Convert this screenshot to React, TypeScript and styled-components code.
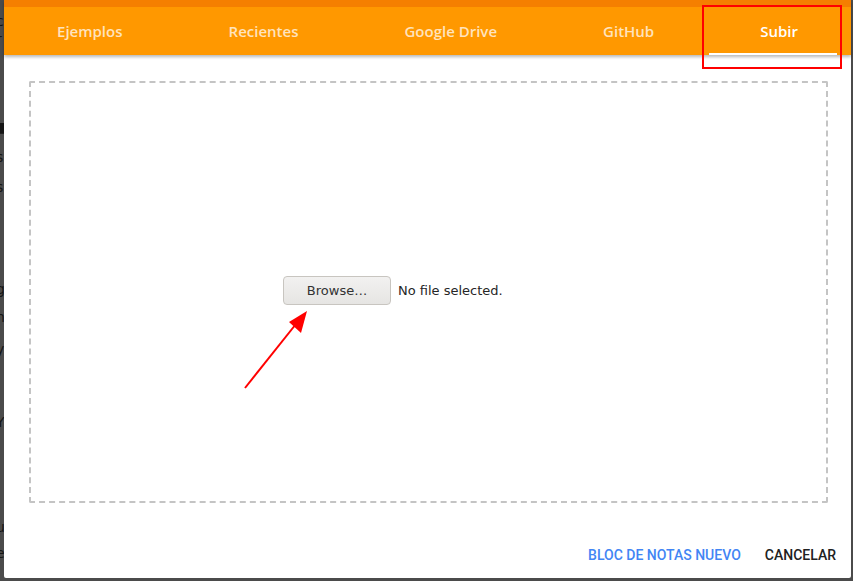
import React from "react";
import styled, { createGlobalStyle } from "styled-components";

const GlobalStyle = createGlobalStyle`
  html, body { margin: 0; padding: 0; background: #4a4a4a; overflow: hidden; }
  * { box-sizing: border-box; }
`;

const Page = styled.div`
  position: relative;
  width: 853px;
  height: 581px;
  background: #4b4b4b;
  overflow: hidden;
  font-family: "DejaVu Sans", sans-serif;
`;

const Backdrop = styled.div`
  display: flex;
  flex-direction: column;
  padding-top: 12px;
  margin-left: -4px;
  font-family: "DejaVu Sans", sans-serif;
  font-size: 14px;
  color: #151515;
`;

const BackLine = styled.div<{ $gap: number }>`
  height: ${(p) => p.$gap}px;
  line-height: 18px;
  white-space: nowrap;
`;

const Dialog = styled.div`
  position: absolute;
  left: 4px;
  top: 0;
  width: 847px;
  height: 578px;
  background: #ffffff;
  display: flex;
  flex-direction: column;
  border-bottom-left-radius: 2px;
  border-bottom-right-radius: 2px;
`;

const Header = styled.div`
  position: relative;
  z-index: 1;
  display: flex;
  flex-direction: column;
  box-shadow: 0 2px 3px rgba(0, 0, 0, 0.28);
`;

const TopStrip = styled.div`
  height: 7px;
  background: #f57f00;
`;

const TabBar = styled.div`
  position: relative;
  display: flex;
  height: 48px;
  background: #ff9800;
`;

const Tab = styled.div<{ $active?: boolean }>`
  flex: 1 1 auto;
  display: flex;
  align-items: center;
  justify-content: center;
  padding: 0 20px;
  font-family: "Open Sans", sans-serif;
  font-weight: 600;
  font-size: 15px;
  color: ${(p) => (p.$active ? "#ffffff" : "#ffe3bd")};
  white-space: nowrap;
`;

const Indicator = styled.div`
  position: absolute;
  left: 705px;
  bottom: 0;
  width: 128px;
  height: 2px;
  background: #ffffff;
`;

const Body = styled.div`
  flex: 1;
  display: flex;
  flex-direction: column;
  padding: 26px 23px 0 25px;
`;

const DropZone = styled.div`
  height: 422px;
  border: 2px dashed #c4c4c4;
  border-radius: 2px;
  display: flex;
  align-items: center;
  justify-content: center;
  padding-bottom: 4px;
`;

const FileInput = styled.div`
  width: 291px;
  display: flex;
  align-items: center;
  gap: 7px;
`;

const BrowseButton = styled.div`
  width: 108px;
  height: 29px;
  display: flex;
  align-items: center;
  justify-content: center;
  border: 1px solid #c8c5c0;
  border-radius: 4px;
  background: linear-gradient(#f2f1f0, #e6e5e3);
  font-family: "DejaVu Sans", sans-serif;
  font-size: 13px;
  color: #333333;
`;

const FileLabel = styled.span`
  font-family: "DejaVu Sans", sans-serif;
  font-size: 13px;
  color: #262626;
`;

const Footer = styled.div`
  height: 75px;
  display: flex;
  justify-content: flex-end;
  align-items: flex-start;
  gap: 24px;
  padding: 44px 15px 0 0;
`;

const FooterButton = styled.span<{ $primary?: boolean }>`
  font-family: Roboto, sans-serif;
  font-weight: 500;
  font-size: 14px;
  line-height: 16px;
  color: ${(p) => (p.$primary ? "#4285f4" : "#212121")};
`;

const Highlight = styled.div`
  position: absolute;
  left: 702px;
  top: 5px;
  width: 140px;
  height: 64px;
  border: 2px solid #ff0000;
  z-index: 5;
`;

const ArrowSvg = styled.svg`
  position: absolute;
  left: 0;
  top: 0;
  z-index: 5;
  pointer-events: none;
`;

const backLines: [number, string][] = [
  [18, "c"],
  [88, "r"],
  [30, "■"],
  [30, "s"],
  [102, "s"],
  [28, "g"],
  [32, "n"],
  [73, "y"],
  [23, "Y"],
  [82, "i"],
  [26, "u"],
  [34, "e"],
];

export default function App() {
  const tabs = ["Ejemplos", "Recientes", "Google Drive", "GitHub", "Subir"];
  return (
    <Page>
      <GlobalStyle />
      <Backdrop>
        {backLines.map(([g, t], i) => (
          <BackLine key={i} $gap={g}>
            {t}
          </BackLine>
        ))}
      </Backdrop>
      <Dialog>
        <Header>
          <TopStrip />
          <TabBar>
            {tabs.map((t) => (
              <Tab key={t} $active={t === "Subir"}>
                {t}
              </Tab>
            ))}
            <Indicator />
          </TabBar>
        </Header>
        <Body>
          <DropZone>
            <FileInput>
              <BrowseButton>Browse…</BrowseButton>
              <FileLabel>No file selected.</FileLabel>
            </FileInput>
          </DropZone>
        </Body>
        <Footer>
          <FooterButton $primary>BLOC DE NOTAS NUEVO</FooterButton>
          <FooterButton>CANCELAR</FooterButton>
        </Footer>
      </Dialog>
      <Highlight />
      <ArrowSvg width="853" height="581" viewBox="0 0 853 581">
        <line x1="245" y1="388" x2="296" y2="324" stroke="#ff0000" strokeWidth="2" />
        <polygon points="307,311 289,322 301,333" fill="#ff0000" />
      </ArrowSvg>
    </Page>
  );
}
